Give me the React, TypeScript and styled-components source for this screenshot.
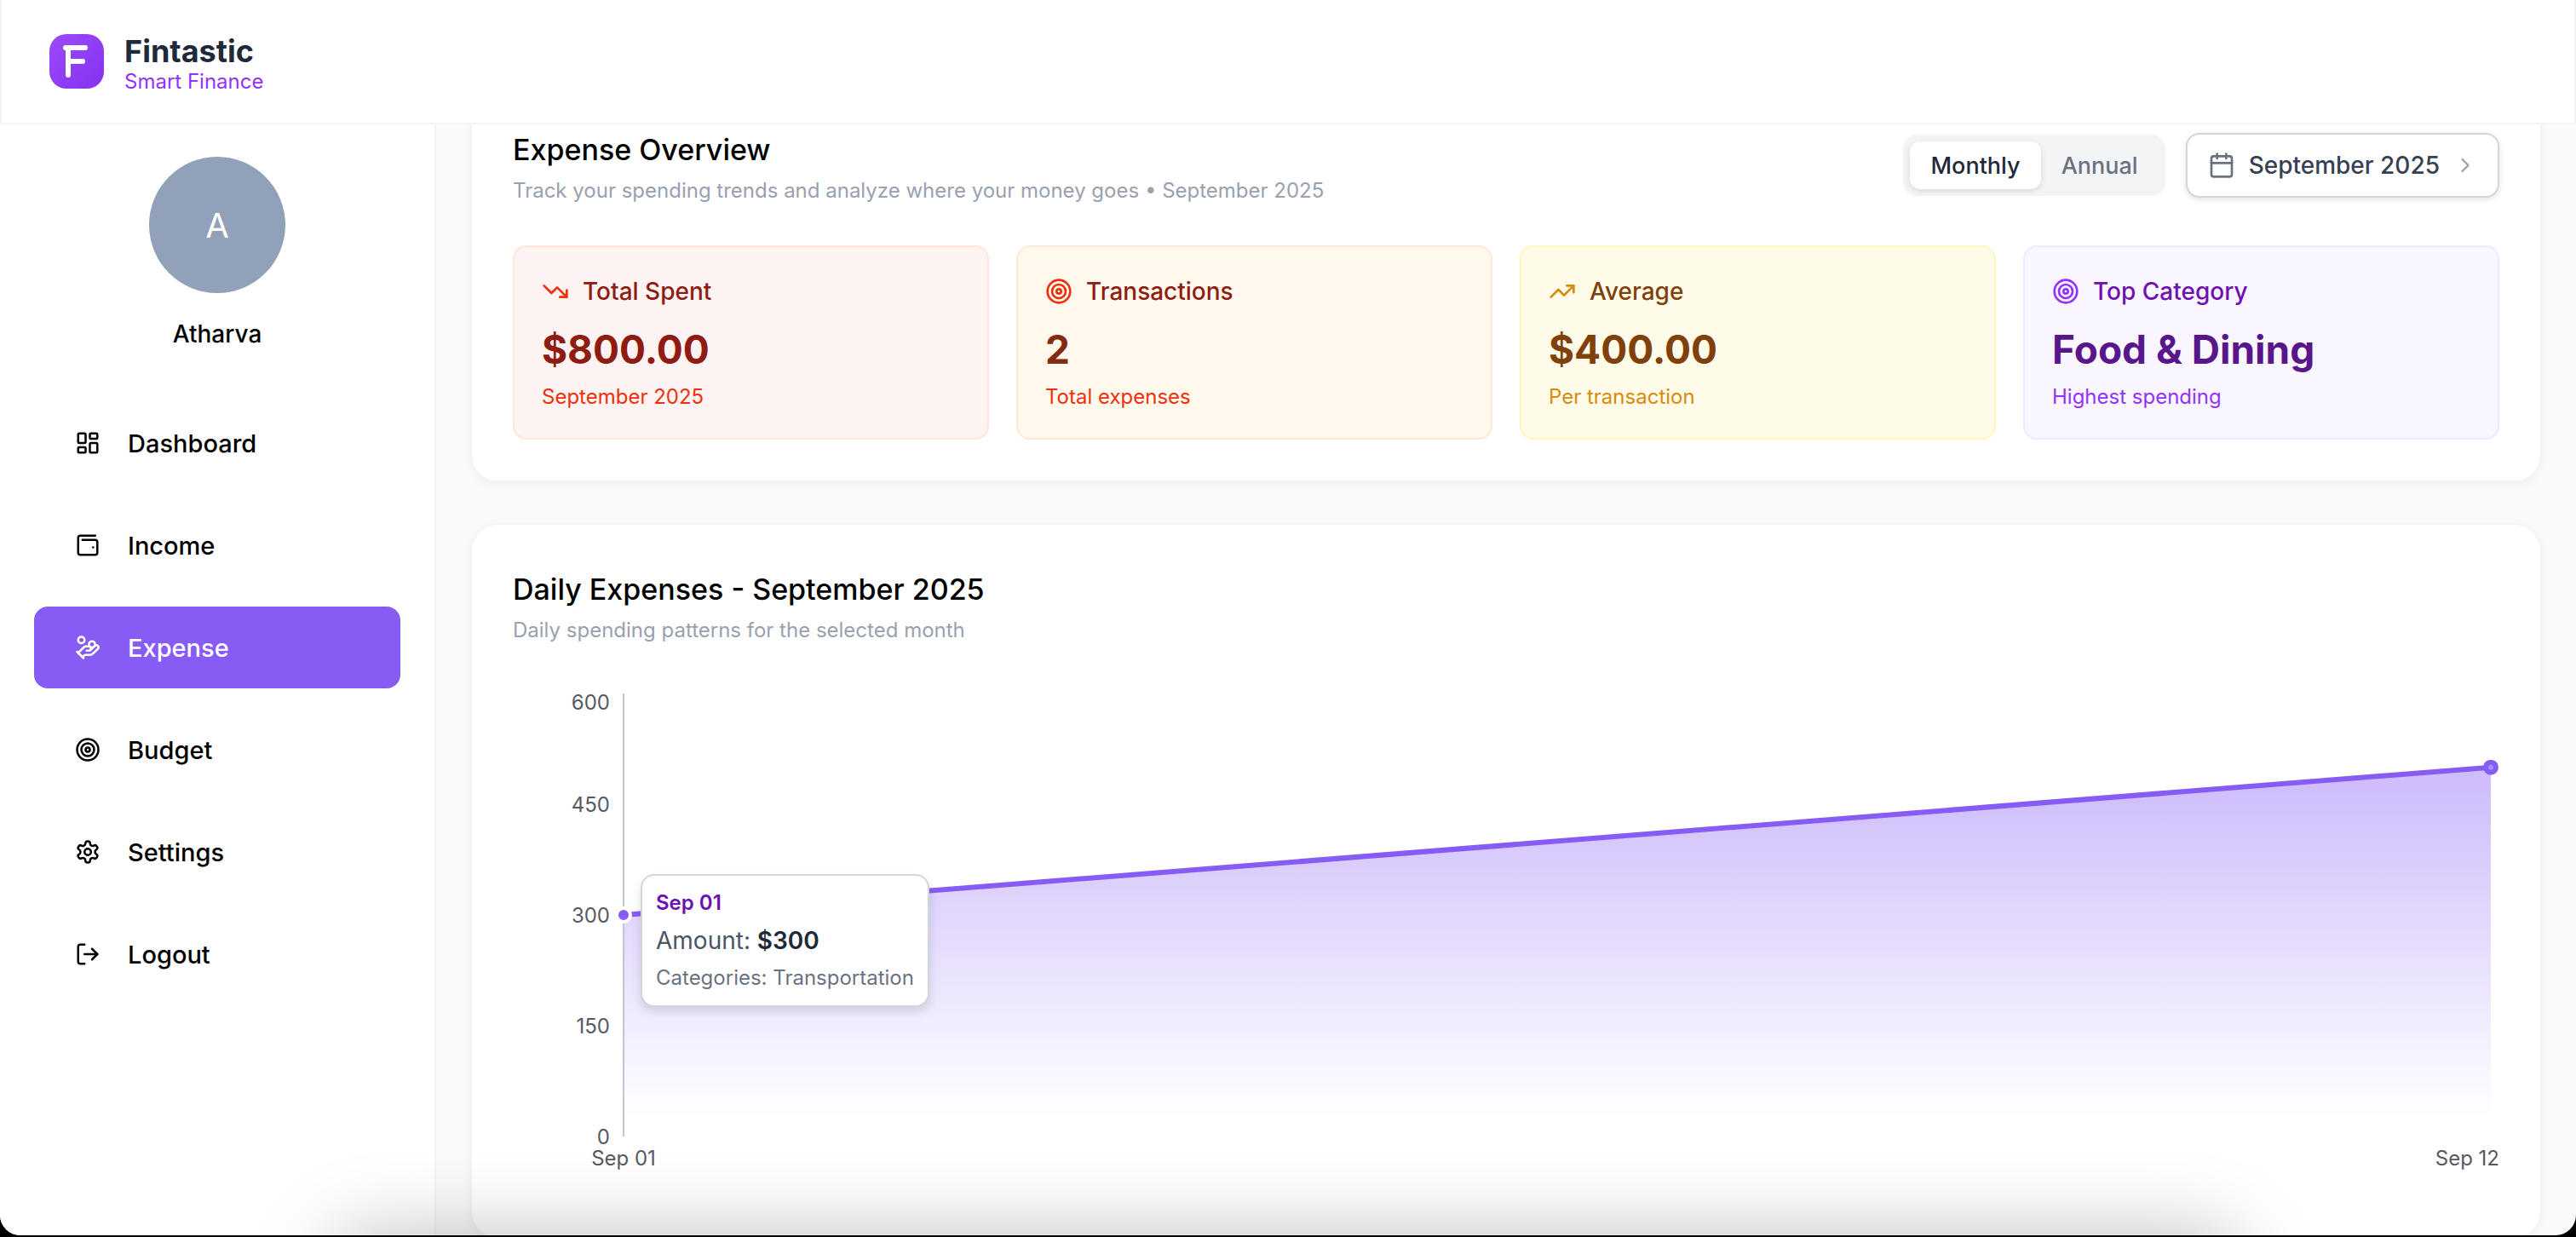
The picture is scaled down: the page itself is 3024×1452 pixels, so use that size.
import React from "react";
import styled, { createGlobalStyle } from "styled-components";
import {
  LuCalendar,
  LuChevronRight,
  LuHandCoins,
  LuLayoutDashboard,
  LuLogOut,
  LuSettings,
  LuTarget,
  LuTrendingDown,
  LuTrendingUp,
  LuWalletMinimal,
} from "react-icons/lu";
import type { IconType } from "react-icons";

const GlobalStyle = createGlobalStyle`
  *, *::before, *::after { box-sizing: border-box; }
  body {
    margin: 0;
    background: #000;
    font-family: Inter, "Liberation Sans", sans-serif;
    color: #000;
  }
  h1, h2, p, ul { margin: 0; padding: 0; }
  ul { list-style: none; }
  button { font: inherit; cursor: pointer; }
`;

const Frame = styled.div`
  position: relative;
  display: flex;
  flex-direction: column;
  height: calc(100vh - 2px);
  overflow: hidden;
  background: #fafafa;
  border-radius: 0 0 24px 24px;
`;

const Header = styled.header`
  display: flex;
  flex: none;
  align-items: center;
  gap: 24px;
  padding: 32px 56px;
  background: #fff;
  border: 2px solid #f3f4f6;
  border-top: 0;
`;

const Brand = styled.div`
  display: flex;
  flex-direction: column;
  padding-top: 8px;
`;

const BrandName = styled.h1`
  font-size: 36px;
  line-height: 40px;
  font-weight: 700;
  color: #1e2939;
`;

const BrandTagline = styled.p`
  font-size: 24px;
  line-height: 32px;
  color: #9333fa;
`;

const Body = styled.div`
  display: flex;
  flex: 1;
  min-height: 0;
`;

const Sidebar = styled.aside`
  flex: none;
  width: 512px;
  padding: 38px 40px;
  background: #fff;
  border-right: 2px solid #f3f4f6;
`;

const Profile = styled.div`
  display: flex;
  flex-direction: column;
  align-items: center;
  gap: 28px;
  margin-bottom: 60px;
`;

const Avatar = styled.div`
  display: flex;
  align-items: center;
  justify-content: center;
  width: 160px;
  height: 160px;
  border-radius: 50%;
  background: #90a1b9;
  color: #fff;
  font-size: 40px;
`;

const ProfileName = styled.p`
  font-size: 28px;
  line-height: 40px;
  font-weight: 500;
`;

const NavList = styled.ul`
  display: flex;
  flex-direction: column;
  gap: 24px;
`;

const NavButton = styled.button<{ $active?: boolean }>`
  display: flex;
  align-items: center;
  gap: 32px;
  width: 100%;
  height: 96px;
  padding: 0 48px;
  border: 0;
  border-radius: 16px;
  background: ${(p) => (p.$active ? "#875cf5" : "transparent")};
  color: ${(p) => (p.$active ? "#fff" : "#000")};
  font-size: 29px;
  font-weight: 450;

  svg { width: 30px; height: 30px; }
`;

const Main = styled.main`
  flex: 1;
  min-width: 0;
  overflow: hidden;
  padding: 0 40px;
`;

const Stack = styled.div`
  display: flex;
  flex-direction: column;
  gap: 48px;
  margin-top: -48px;
`;

const Card = styled.section`
  padding: 48px;
  background: #fff;
  border: 2px solid #f3f4f6;
  border-radius: 32px;
  box-shadow: 0 4px 12px rgba(0, 0, 0, 0.04);
`;

const CardHeader = styled.div`
  display: flex;
  align-items: center;
  justify-content: space-between;
  margin-bottom: 48px;
`;

const CardTitle = styled.h2`
  font-size: 34px;
  line-height: 56px;
  font-weight: 450;
`;

const CardNote = styled.p`
  margin-top: 4px;
  font-size: 24px;
  line-height: 32px;
  color: #99a1af;
`;

const Controls = styled.div`
  display: flex;
  align-items: center;
  gap: 24px;
`;

const Segments = styled.div`
  display: flex;
  padding: 8px;
  border-radius: 16px;
  background: #f3f4f6;
`;

const Segment = styled.button<{ $active?: boolean }>`
  height: 56px;
  padding: 0 24px;
  border: 0;
  border-radius: 12px;
  background: ${(p) => (p.$active ? "#fff" : "transparent")};
  box-shadow: ${(p) => (p.$active ? "0 2px 6px rgba(0, 0, 0, 0.12)" : "none")};
  color: ${(p) => (p.$active ? "#1e2939" : "#6a7282")};
  font-size: 27px;
  font-weight: 500;
`;

const MonthButton = styled.button`
  display: flex;
  align-items: center;
  gap: 16px;
  height: 76px;
  padding: 0 24px;
  border: 2px solid #d1d5dc;
  border-radius: 16px;
  background: #fff;
  box-shadow: 0 2px 6px rgba(0, 0, 0, 0.12);
  color: #364153;
  font-size: 28px;
  font-weight: 500;
`;

const CalendarIcon = styled(LuCalendar)`
  width: 32px;
  height: 32px;
  color: #6a7282;
`;

const ChevronIcon = styled(LuChevronRight)`
  width: 28px;
  height: 28px;
  color: #99a1af;
`;

const StatGrid = styled.div`
  display: grid;
  grid-template-columns: repeat(4, 1fr);
  gap: 32px;
`;

type Tone = {
  background: string;
  border: string;
  label: string;
  value: string;
  accent: string;
};

const StatCard = styled.article<{ $tone: Tone }>`
  padding: 32px;
  border: 2px solid ${(p) => p.$tone.border};
  border-radius: 16px;
  background: ${(p) => p.$tone.background};
  color: ${(p) => p.$tone.accent};
`;

const StatLabel = styled.div<{ $tone: Tone }>`
  display: flex;
  align-items: center;
  gap: 16px;
  margin-bottom: 16px;
  font-size: 28px;
  line-height: 40px;
  font-weight: 500;

  svg { width: 32px; height: 32px; }
  span { color: ${(p) => p.$tone.label}; }
`;

const StatValue = styled.p<{ $tone: Tone }>`
  font-size: 46px;
  line-height: 64px;
  font-weight: 700;
  color: ${(p) => p.$tone.value};
`;

const StatNote = styled.p`
  margin-top: 8px;
  font-size: 24px;
  line-height: 32px;
`;

const Chart = styled.div`
  height: 600px;
  padding: 10px 10px 70px 130px;
`;

const Plot = styled.div`
  position: relative;
  height: 520px;
`;

const PlotSvg = styled.svg`
  display: block;
  width: 100%;
  height: 100%;
  overflow: visible;

  text {
    font-size: 24px;
    fill: #555a64;
  }
`;

const Tooltip = styled.div`
  position: absolute;
  top: 212px;
  left: 20px;
  padding: 16px;
  border: 2px solid #d1d5dc;
  border-radius: 16px;
  background: #fff;
  box-shadow: 0 6px 12px rgba(0, 0, 0, 0.12);
  white-space: nowrap;
`;

const TooltipDate = styled.p`
  font-size: 24px;
  line-height: 32px;
  font-weight: 600;
  color: #6e11b0;
`;

const TooltipAmount = styled.p`
  margin: 8px 0;
  font-size: 28px;
  line-height: 40px;
  color: #4a5565;

  strong {
    font-weight: 600;
    color: #1e2939;
  }
`;

const TooltipCategories = styled.p`
  font-size: 24px;
  line-height: 32px;
  color: #6a7282;
`;

const BottomShade = styled.div`
  position: absolute;
  top: 100%;
  left: 390px;
  right: 396px;
  height: 400px;
  border-radius: 40px;
  box-shadow: 0 0 96px rgba(0, 0, 0, 0.26);
  pointer-events: none;
`;

function Logo() {
  return (
    <svg width="64" height="64" viewBox="0 0 64 64" aria-hidden="true">
      <defs>
        <linearGradient id="logo-fill" x1="0" y1="0" x2="1" y2="1">
          <stop offset="0" stopColor="#9d4afb" />
          <stop offset="1" stopColor="#8433ef" />
        </linearGradient>
      </defs>
      <rect width="64" height="64" rx="20" fill="url(#logo-fill)" />
      <g stroke="#fff" strokeWidth="6" strokeLinecap="round" strokeLinejoin="round" fill="none">
        <path d="M19 16H42" />
        <path d="M22 17V48" />
        <path d="M22 32H39" />
      </g>
    </svg>
  );
}

const navItems: { label: string; icon: IconType; active?: boolean }[] = [
  { label: "Dashboard", icon: LuLayoutDashboard },
  { label: "Income", icon: LuWalletMinimal },
  { label: "Expense", icon: LuHandCoins, active: true },
  { label: "Budget", icon: LuTarget },
  { label: "Settings", icon: LuSettings },
  { label: "Logout", icon: LuLogOut },
];

const stats: { label: string; value: string; note: string; icon: IconType; tone: Tone }[] = [
  {
    label: "Total Spent",
    value: "$800.00",
    note: "September 2025",
    icon: LuTrendingDown,
    tone: { background: "#fdf3f2", border: "#ffe5d9", label: "#8f1c12", value: "#8f1c12", accent: "#ee300c" },
  },
  {
    label: "Transactions",
    value: "2",
    note: "Total expenses",
    icon: LuTarget,
    tone: { background: "#fff8ec", border: "#ffe8d4", label: "#8f1c12", value: "#842b12", accent: "#ee300c" },
  },
  {
    label: "Average",
    value: "$400.00",
    note: "Per transaction",
    icon: LuTrendingUp,
    tone: { background: "#fefbe8", border: "#fef7bb", label: "#7f400c", value: "#7f400c", accent: "#d98a0c" },
  },
  {
    label: "Top Category",
    value: "Food & Dining",
    note: "Highest spending",
    icon: LuTarget,
    tone: { background: "#f9f6ff", border: "#efe8ff", label: "#6e11b0", value: "#59168b", accent: "#9333fa" },
  },
];

const AXIS_MAX = 600;
const PLOT_HEIGHT = 520;
const yTicks = [600, 450, 300, 150, 0];
const points = [
  { label: "Sep 01", amount: 300 },
  { label: "Sep 12", amount: 500 },
];

const yOf = (amount: number) => PLOT_HEIGHT - (amount / AXIS_MAX) * PLOT_HEIGHT;

function ExpenseChart() {
  const [first, last] = points;
  const y1 = yOf(first.amount);
  const y2 = yOf(last.amount);
  return (
    <Chart>
      <Plot>
        <PlotSvg role="img" aria-label="Daily expenses for September 2025">
          <defs>
            <linearGradient id="area-fill" x1="0" y1="0" x2="0" y2="1">
              <stop offset="5%" stopColor="#875cf5" stopOpacity="0.4" />
              <stop offset="95%" stopColor="#875cf5" stopOpacity="0" />
            </linearGradient>
          </defs>
          <svg width="100%" height="100%" viewBox={`0 0 100 ${PLOT_HEIGHT}`} preserveAspectRatio="none">
            <polygon
              points={`0,${y1} 100,${y2} 100,${PLOT_HEIGHT} 0,${PLOT_HEIGHT}`}
              fill="url(#area-fill)"
            />
          </svg>
          <line x1="0" y1="0" x2="0" y2="100%" stroke="#c4c4ca" strokeWidth="2" />
          <line x1="0" y1={y1} x2="100%" y2={y2} stroke="#875cf5" strokeWidth="6" />
          <circle cx="100%" cy={y2} r="6" fill="#ab8df8" stroke="#875cf5" strokeWidth="6" />
          <circle cx="0" cy={y1} r="8" fill="#875cf5" stroke="#fff" strokeWidth="4" />
          {yTicks.map((tick) => (
            <text key={tick} x="-16" y={Math.max(yOf(tick), 10)} dy="9" textAnchor="end">
              {tick}
            </text>
          ))}
          <text x="0" y={PLOT_HEIGHT} dy="34" textAnchor="middle">
            {first.label}
          </text>
          <text x="100%" y={PLOT_HEIGHT} dx="10" dy="34" textAnchor="end">
            {last.label}
          </text>
        </PlotSvg>
        <Tooltip>
          <TooltipDate>Sep 01</TooltipDate>
          <TooltipAmount>
            Amount: <strong>$300</strong>
          </TooltipAmount>
          <TooltipCategories>Categories: Transportation</TooltipCategories>
        </Tooltip>
      </Plot>
    </Chart>
  );
}

export default function App() {
  return (
    <>
      <GlobalStyle />
      <Frame>
        <Header>
          <Logo />
          <Brand>
            <BrandName>Fintastic</BrandName>
            <BrandTagline>Smart Finance</BrandTagline>
          </Brand>
        </Header>
        <Body>
          <Sidebar>
            <Profile>
              <Avatar>A</Avatar>
              <ProfileName>Atharva</ProfileName>
            </Profile>
            <nav>
              <NavList>
                {navItems.map(({ label, icon: Icon, active }) => (
                  <li key={label}>
                    <NavButton type="button" $active={active}>
                      <Icon />
                      {label}
                    </NavButton>
                  </li>
                ))}
              </NavList>
            </nav>
          </Sidebar>
          <Main>
            <Stack>
              <Card>
                <CardHeader>
                  <div>
                    <CardTitle>Expense Overview</CardTitle>
                    <CardNote>
                      Track your spending trends and analyze where your money goes • September 2025
                    </CardNote>
                  </div>
                  <Controls>
                    <Segments>
                      <Segment type="button" $active>
                        Monthly
                      </Segment>
                      <Segment type="button">Annual</Segment>
                    </Segments>
                    <MonthButton type="button">
                      <CalendarIcon />
                      September 2025
                      <ChevronIcon />
                    </MonthButton>
                  </Controls>
                </CardHeader>
                <StatGrid>
                  {stats.map(({ label, value, note, icon: Icon, tone }) => (
                    <StatCard key={label} $tone={tone}>
                      <StatLabel $tone={tone}>
                        <Icon />
                        <span>{label}</span>
                      </StatLabel>
                      <StatValue $tone={tone}>{value}</StatValue>
                      <StatNote>{note}</StatNote>
                    </StatCard>
                  ))}
                </StatGrid>
              </Card>
              <Card>
                <CardHeader>
                  <div>
                    <CardTitle>Daily Expenses - September 2025</CardTitle>
                    <CardNote>Daily spending patterns for the selected month</CardNote>
                  </div>
                </CardHeader>
                <ExpenseChart />
              </Card>
            </Stack>
          </Main>
        </Body>
        <BottomShade />
      </Frame>
    </>
  );
}
